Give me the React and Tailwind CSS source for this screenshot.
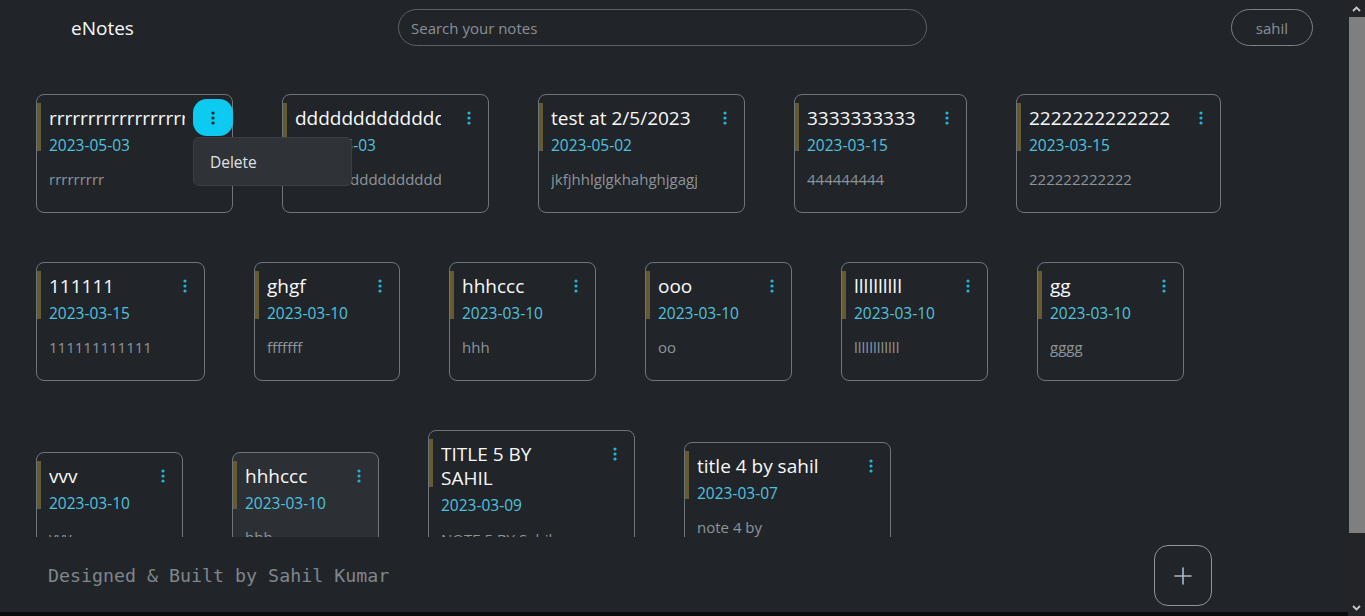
import React from "react";

const notes = [
  [
    { t: "rrrrrrrrrrrrrrrrrr", d: "2023-05-03", n: "rrrrrrrrr", w: "w-[136px]", active: true },
    { t: "ddddddddddddd", d: "2023-05-03", n: "dddddddddddddddd", w: "w-[146px]" },
    { t: "test at 2/5/2023", d: "2023-05-02", n: "jkfjhhlglgkhahghjgagjh", w: "w-[146px]" },
    { t: "3333333333", d: "2023-03-15", n: "444444444", w: "w-[112px]" },
    { t: "2222222222222", d: "2023-03-15", n: "222222222222", w: "w-[144px]" },
  ],
  [
    { t: "111111", d: "2023-03-15", n: "111111111111", w: "w-[108px]" },
    { t: "ghgf", d: "2023-03-10", n: "fffffff", w: "w-[85px]" },
    { t: "hhhccc", d: "2023-03-10", n: "hhh", w: "w-[86px]" },
    { t: "ooo", d: "2023-03-10", n: "oo", w: "w-[86px]" },
    { t: "llllllllll", d: "2023-03-10", n: "llllllllllll", w: "w-[86px]" },
    { t: "gg", d: "2023-03-10", n: "gggg", w: "w-[86px]" },
  ],
  [
    { t: "vvv", d: "2023-03-10", n: "vvv", w: "w-[86px]" },
    { t: "hhhccc", d: "2023-03-10", n: "hhh", w: "w-[86px]", hover: true },
    { t: "TITLE 5 BY\nSAHIL", d: "2023-03-09", n: "NOTE 5 BY Sahil\nkumar", w: "w-[146px]" },
    { t: "title 4 by sahil", d: "2023-03-07", n: "note 4 by\nsahil", w: "w-[146px]" },
  ],
].flat();

function Dots({ color }) {
  return (
    <svg width="4" height="14" viewBox="0 0 4 14" fill={color}>
      <circle cx="2" cy="2" r="1.6" />
      <circle cx="2" cy="7" r="1.6" />
      <circle cx="2" cy="12" r="1.6" />
    </svg>
  );
}

function Card({ note }) {
  return (
    <div
      className={`flex shrink-0 rounded-lg border border-[#6c757d] ${
        note.hover ? "bg-[#2c2f34]" : "bg-transparent"
      }`}
    >
      <div className="mt-[8px] h-[48px] w-[4px] shrink-0 bg-[#665a33]" />
      <div className={`ml-[8px] ${note.w} shrink-0 overflow-hidden pt-[11px] pb-[23px]`}>
        <div className="whitespace-pre-line text-[19px] leading-[24px] text-[#f8f9fa]">{note.t}</div>
        <div className="mt-[3px] text-[15.5px] leading-[24px] text-[#4fc2df]">{note.d}</div>
        <div className="mt-[12px] whitespace-pre-line text-[15px] leading-[20px] text-[#8d949b]">{note.n}</div>
      </div>
      <div className="relative ml-[8px] w-[39px] shrink-0">
        <div
          className={`mt-[4px] flex h-[37px] w-[40px] items-center justify-center rounded-[14px] ${
            note.active ? "bg-[#0dcaf0]" : ""
          }`}
        >
          <Dots color={note.active ? "#1b1f23" : "#23b4d6"} />
        </div>
        {note.active && (
          <div className="absolute left-0 top-[42px] z-10 flex h-[49px] w-[159px] items-center rounded-md border border-[#3a3f45] bg-[#2f3338] pl-[16px] pt-[2px] text-[15.5px] text-[#dee2e6]">
            Delete
          </div>
        )}
      </div>
    </div>
  );
}

export default function App() {
  return (
    <div
      className="flex h-[616px] w-full overflow-hidden bg-[#212529]"
      style={{ fontFamily: '"Open Sans", "Noto Sans", sans-serif' }}
    >
      <div className="flex min-w-0 flex-1 flex-col">
        <header className="flex h-[54px] shrink-0 items-start pt-[9px]">
          <div className="flex h-[36px] w-[398px] shrink-0 items-center pl-[71px] pt-[2px] text-[19px] text-[#f8f9fa]">
            eNotes
          </div>
          <div className="flex h-[37px] w-[529px] shrink-0 items-center rounded-full border border-[#5c6168] pl-[12px] pt-[1px] text-[15px] text-[#8b9096]">
            Search your notes
          </div>
          <div className="flex-1" />
          <div className="mr-[35px] flex h-[37px] w-[82px] shrink-0 items-center justify-center rounded-full border border-[#7b8188] pt-[1px] text-[15px] text-[#8a9097]">
            sahil
          </div>
        </header>

        <main className="min-h-0 flex-1 overflow-hidden pt-[40px]">
          <div className="flex flex-wrap items-center gap-[49px] px-[36px]">
            {notes.map((n, i) => (
              <Card key={i} note={n} />
            ))}
          </div>
        </main>

        <footer className="flex h-[75px] shrink-0 items-center pl-[48px]">
          <div
            className="pt-[3px] text-[18.3px] text-[#7f868d]"
            style={{ fontFamily: '"DejaVu Sans Mono", "Liberation Mono", monospace' }}
          >
            Designed &amp; Built by Sahil Kumar
          </div>
          <div className="flex-1" />
          <div className="mr-[136px] mt-[2px] flex h-[61px] w-[58px] items-center justify-center rounded-[14px] border border-[#8e949a]">
            <svg width="18" height="18" viewBox="0 0 18 18" stroke="#a9b8c7" strokeWidth="1.6" strokeLinecap="round">
              <line x1="9" y1="1" x2="9" y2="17" />
              <line x1="1" y1="9" x2="17" y2="9" />
            </svg>
          </div>
        </footer>
        <div className="h-[4px] shrink-0 bg-[#0b0c0d]" />
      </div>

      <div className="flex w-[17px] shrink-0 flex-col bg-[#232428]">
        <div className="flex h-[17px] items-center justify-center">
          <svg width="9" height="6" viewBox="0 0 9 6" fill="none" stroke="#c9c9c9" strokeWidth="1.8">
            <polyline points="1,5 4.5,1.5 8,5" />
          </svg>
        </div>
        <div className="ml-[1px] h-[516px] bg-[#7f7f7f]" />
        <div className="flex-1" />
        <div className="flex h-[17px] items-center justify-center">
          <svg width="9" height="6" viewBox="0 0 9 6" fill="none" stroke="#c9c9c9" strokeWidth="1.8">
            <polyline points="1,1 4.5,4.5 8,1" />
          </svg>
        </div>
      </div>
    </div>
  );
}
